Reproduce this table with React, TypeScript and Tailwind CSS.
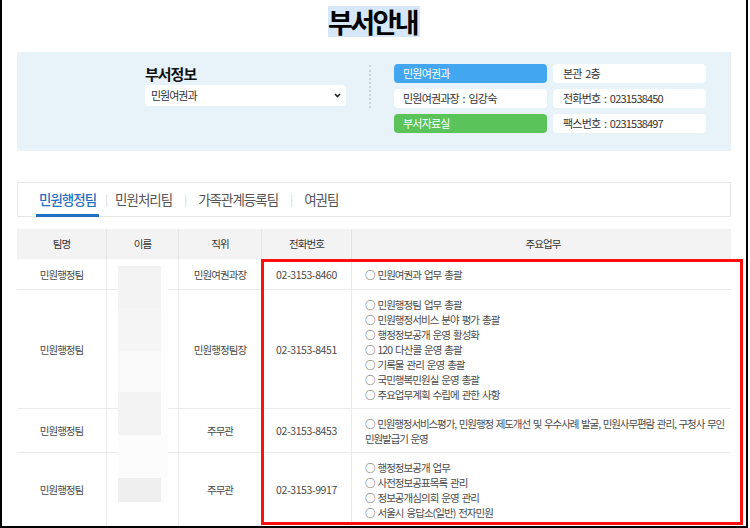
import React from "react";

const rows = [
  { team: "민원행정팀", pos: "민원여권과장", tel: "02-3153-8460", duties: ["민원여권과 업무 총괄"], h: "min-h-[31px]" },
  {
    team: "민원행정팀",
    pos: "민원행정팀장",
    tel: "02-3153-8451",
    duties: [
      "민원행정팀 업무 총괄",
      "민원행정서비스 분야 평가 총괄",
      "행정정보공개 운영 활성화",
      "120 다산콜 운영 총괄",
      "기록물 관리 운영 총괄",
      "국민행복민원실 운영 총괄",
      "주요업무계획 수립에 관한 사항",
    ],
    h: "",
  },
  { team: "민원행정팀", pos: "주무관", tel: "02-3153-8453", duties: [] as string[], wrap: true, h: "" },
  {
    team: "민원행정팀",
    pos: "주무관",
    tel: "02-3153-9917",
    duties: ["행정정보공개 업무", "사전정보공표목록 관리", "정보공개심의회 운영 관리", "서울시 응답소(일반) 전자민원"],
    h: "",
  },
];

export default function App() {
  return (
    <div className="relative w-[750px] h-[528px] overflow-hidden bg-white font-['Noto_Sans_CJK_KR','Noto_Sans',sans-serif] text-[#444]">
      <div className="w-[748px] h-[528px] border-l-2 border-r-2 border-b-2 border-black px-[15px] overflow-hidden">
        {/* Title */}
        <div className="h-[52px] pb-[9px] flex items-center justify-center">
          <span className="bg-[#d6e8f8] text-black text-[27px] font-bold leading-[31px] tracking-[-2.6px] pr-[3px]">부서안내</span>
        </div>

        {/* Info panel */}
        <div className="h-[99px] bg-[#e8f2f9] flex pt-[12px]">
          <div className="w-[352px] pl-[128px] flex flex-col">
            <div className="text-[15px] font-bold text-[#111] leading-[18px] tracking-[-1px] mt-[1px]">부서정보</div>
            <div className="mt-[2px] w-[201px] h-[21px] bg-white rounded-[4px] flex items-center justify-between pl-[6px] pr-[5px]">
              <span className="text-[11px] text-[#333] tracking-[-1px]">민원여권과</span>
              <svg width="7" height="5" viewBox="0 0 7 5">
                <path d="M1 1 L3.5 3.5 L6 1" stroke="#222" strokeWidth="1.6" fill="none" />
              </svg>
            </div>
          </div>
          <div className="h-[43px] mt-[1px] border-l-2 border-dotted border-[#c9d2da]" />
          <div className="pl-[23px] grid grid-cols-[153px_153px] gap-x-[6px] gap-y-[6px] auto-rows-[19px] text-[11px] tracking-[-0.8px] [word-spacing:2px] leading-[19px]">
            <div className="bg-[#42a6f0] text-white rounded-[4px] pl-[9px]">민원여권과</div>
            <div className="bg-white text-[#333] rounded-[4px] pl-[10px]">본관 2층</div>
            <div className="bg-white text-[#333] rounded-[4px] pl-[9px]">민원여권과장 : 임강숙</div>
            <div className="bg-white text-[#333] rounded-[4px] pl-[10px]">전화번호 : 0231538450</div>
            <div className="bg-[#5ac35a] text-white rounded-[4px] pl-[9px]">부서자료실</div>
            <div className="bg-white text-[#333] rounded-[4px] pl-[10px]">팩스번호 : 0231538497</div>
          </div>
        </div>

        {/* Tabs */}
        <div className="mt-[31px] h-[35px] border border-[#e6e6e6] flex items-stretch pl-[18px] text-[13.5px] tracking-[-1px]">
          <div className="relative px-[3px] flex items-center text-[#1f6fc2] font-medium">
            민원행정팀
            <div className="absolute left-0 right-0 bottom-[-1px] h-[3px] bg-[#1f6fc2]" />
          </div>
          <div className="flex items-center text-[#d4d4d4] text-[11px] ml-[6px] mr-[8px]">|</div>
          <div className="flex items-center text-[#555]">민원처리팀</div>
          <div className="flex items-center text-[#d4d4d4] text-[11px] mx-[12px]">|</div>
          <div className="flex items-center text-[#555]">가족관계등록팀</div>
          <div className="flex items-center text-[#d4d4d4] text-[11px] mx-[12px]">|</div>
          <div className="flex items-center text-[#555]">여권팀</div>
        </div>

        {/* Table */}
        <div className="relative mt-[12px] text-[10.5px] tracking-[-0.95px] [word-spacing:1.5px]">
          <div className="grid grid-cols-[90px_72px_83px_90px_382px] h-[30px] bg-[#f3f3f3] text-[#333] leading-[30px] text-center">
            <div className="border-r border-[#e3e3e3]">팀명</div>
            <div className="border-r border-[#e3e3e3]">이름</div>
            <div className="border-r border-[#e3e3e3]">직위</div>
            <div className="border-r border-[#e3e3e3]">전화번호</div>
            <div>주요업무</div>
          </div>
          {rows.map((r, i) => (
            <div key={i} className={`grid grid-cols-[90px_72px_83px_90px_382px] border-b border-[#ebebeb] leading-[15px] text-[#4a4a4a] ${r.h}`}>
              <div className="border-r border-[#ebebeb] flex items-center justify-center">{r.team}</div>
              <div className="border-r border-[#ebebeb]" />
              <div className="border-r border-[#ebebeb] flex items-center justify-center">{r.pos}</div>
              <div className="border-r border-[#ebebeb] flex items-center justify-center tracking-[-0.4px]">{r.tel}</div>
              <div className="pt-[7px] pb-[6px] pl-[13px] whitespace-nowrap flex flex-col justify-center">
                {r.wrap ? (
                  <div className="tracking-[-1.1px]">
                    ○ 민원행정서비스평가, 민원행정 제도개선 및 우수사례 발굴, 민원사무편람 관리, 구청사 무인
                    <br />
                    민원발급기 운영
                  </div>
                ) : (
                  r.duties.map((d, j) => <div key={j}>○ {d}</div>)
                )}
              </div>
            </div>
          ))}
          {/* redacted names overlay */}
          <div className="absolute left-[101px] top-[37px] w-[50px] h-[236px] bg-[#fdfdfd] flex flex-col">
            <div className="h-[42px] w-[43px] bg-[#f3f3f3]" />
            <div className="h-[43px] w-[43px] bg-[#f5f5f5]" />
            <div className="h-[41px] w-[43px] bg-[#f9f9f9]" />
            <div className="h-[43px] w-[43px] bg-[#f3f3f3]" />
            <div className="h-[43px] w-[50px] bg-[#fcfcfc]" />
            <div className="h-[24px] w-[43px] bg-[#efefef]" />
          </div>
        </div>
      </div>

      {/* red annotation box */}
      <div className="absolute left-[261px] top-[259px] w-[482px] h-[266px] border-[3px] border-[#ff1010]" />
    </div>
  );
}
